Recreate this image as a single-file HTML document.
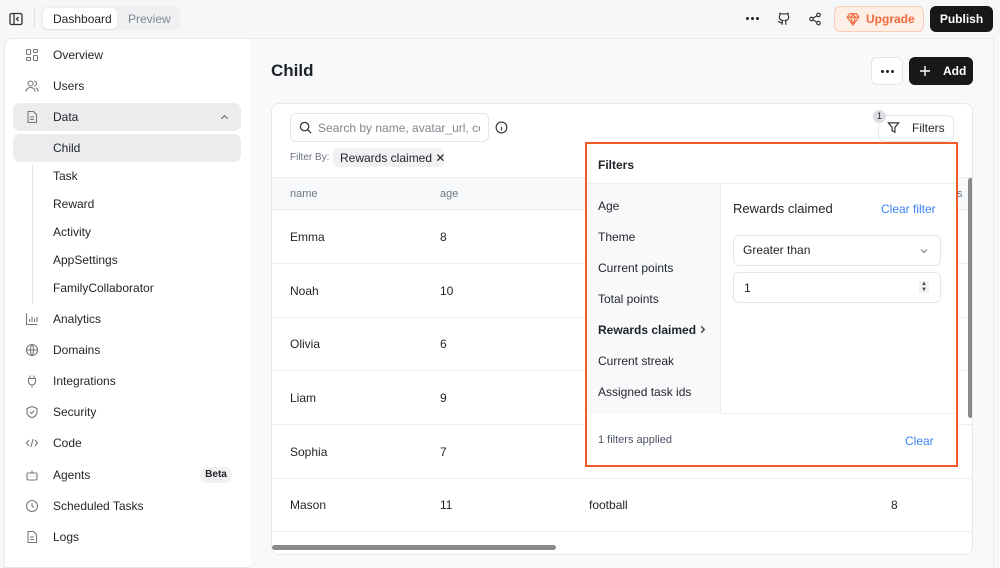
<!DOCTYPE html>
<html><head><style>
*{box-sizing:border-box;margin:0;padding:0}
body{width:1000px;height:559px;overflow:hidden;background:#f6f7f9;font-family:"Liberation Sans",sans-serif;color:#1f2328;position:relative;font-size:12px}
.a{position:absolute}
.sb{left:4px;top:38px;width:247px;height:530px;background:#fff;border:1px solid #e6e8eb;border-radius:8px 0 0 0}
.nav{position:absolute;left:53px;font-size:12px;color:#1f2328;white-space:nowrap}
.ic{position:absolute;left:25px;width:14px;height:14px}
.main{left:250px;top:38px;width:744px;height:530px;background:#f8f9fb;border-top:1px solid #e6e8eb;border-right:1px solid #e6e8eb}
.card{left:271px;top:103px;width:702px;height:452px;background:#fff;border:1px solid #e6e8eb;border-radius:8px;overflow:hidden}
.row{position:absolute;left:0;width:700px;border-top:1px solid #eceef0}
.td{position:absolute;font-size:12px}
.pop{left:585px;top:142px;width:373px;height:325px;border:2px solid #f15a29;background:#fff}
.fl{position:absolute;left:11px;font-size:12px}
.dots{display:flex;align-items:center;justify-content:center;gap:2px}
.dots i{width:3px;height:3px;border-radius:2px;background:#222;display:block}
</style></head><body>
<!-- top bar -->
<svg class="a" style="left:9px;top:12px" width="14" height="14" viewBox="0 0 14 14" fill="none" stroke="#333" stroke-width="1.3"><rect x="1" y="1.5" width="12" height="11" rx="1.5"/><path d="M5 1.5v11M9.5 5l-2 2 2 2"/></svg>
<div class="a" style="left:34px;top:8px;width:1px;height:20px;background:#e0e2e5"></div>
<div class="a" style="left:41px;top:6px;width:139px;height:25px;background:#eff0f2;border-radius:7px"></div>
<div class="a" style="left:43px;top:8px;width:74px;height:21px;background:#fff;border-radius:6px;box-shadow:0 1px 1px rgba(0,0,0,.06)"></div>
<div class="a" style="left:53px;top:12px;font-size:12px">Dashboard</div>
<div class="a" style="left:128px;top:12px;font-size:12px;color:#80868f">Preview</div>
<div class="a dots" style="left:744px;top:12px;width:16px;height:12px"><i></i><i></i><i></i></div>
<svg class="a" style="left:777px;top:12px" width="14" height="14" viewBox="0 0 24 24" fill="none" stroke="#333" stroke-width="2"><path d="M15 22v-4a4.8 4.8 0 0 0-1-3.5c3 0 6-2 6-5.5.08-1.25-.27-2.48-1-3.5.28-1.150.28-2.350 0-3.5 0 0-1 0-3 1.5-2.64-.5-5.360-.5-8 0C6 2 5 2 5 2c-.3 1.15-.3 2.35 0 3.5A5.4 5.4 0 0 0 4 9c0 3.5 3 5.5 6 5.5-.39.49-.68 1.05-.85 1.65S8.93 17.38 9 18v4"/><path d="M9 18c-4.51 2-5-2-7-2"/></svg>
<svg class="a" style="left:808px;top:12px" width="14" height="14" viewBox="0 0 24 24" fill="none" stroke="#333" stroke-width="2"><circle cx="18" cy="5" r="3"/><circle cx="6" cy="12" r="3"/><circle cx="18" cy="19" r="3"/><path d="M8.6 13.5l6.8 4M15.4 6.5l-6.8 4"/></svg>
<div class="a" style="left:834px;top:6px;width:90px;height:26px;background:#fdeee6;border:1px solid #f8cdb7;border-radius:6px"></div>
<svg class="a" style="left:846px;top:12px" width="14" height="14" viewBox="0 0 24 24" fill="none" stroke="#f26a3b" stroke-width="2"><path d="M6 3h12l4 6-10 13L2 9z"/><path d="M2 9h20M12 22 8 9l4-6 4 6z"/></svg>
<div class="a" style="left:866px;top:12px;font-size:12px;font-weight:bold;color:#f26a3b">Upgrade</div>
<div class="a" style="left:930px;top:6px;width:63px;height:26px;background:#16181a;border-radius:6px;color:#fff;font-weight:bold;font-size:12px;text-align:center;line-height:26px">Publish</div>

<!-- sidebar -->
<div class="a sb"></div>
<div class="a" style="left:13px;top:103px;width:228px;height:28px;background:#ebecee;border-radius:7px"></div>
<div class="a" style="left:13px;top:134px;width:228px;height:28px;background:#ebecee;border-radius:7px"></div>
<div class="a" style="left:32px;top:164px;width:1px;height:140px;background:#e3e5e8"></div>
<svg class="ic" style="top:48px" viewBox="0 0 14 14" fill="none" stroke="#777" stroke-width="1.1"><rect x="1.5" y="1.5" width="4" height="5" rx="1"/><rect x="8.5" y="1.5" width="4" height="3" rx="1"/><rect x="8.5" y="7.5" width="4" height="5" rx="1"/><rect x="1.5" y="9.5" width="4" height="3" rx="1"/></svg>
<div class="nav" style="top:48px">Overview</div>
<svg class="ic" style="top:79px" viewBox="0 0 14 14" fill="none" stroke="#777" stroke-width="1.1"><circle cx="5.5" cy="4.5" r="2.5"/><path d="M1 12.5c0-2.5 2-4 4.5-4s4.5 1.5 4.5 4M9 2a2.5 2.5 0 0 1 0 5M11 9c1.3.5 2 1.8 2 3.5"/></svg>
<div class="nav" style="top:79px">Users</div>
<svg class="ic" style="top:110px" viewBox="0 0 14 14" fill="none" stroke="#777" stroke-width="1.1"><path d="M3 1.5h5.5l3 3v8h-8.5z"/><path d="M5 7h4M5 9.5h4"/></svg>
<div class="nav" style="top:110px">Data</div>
<svg class="a" style="left:219px;top:112px" width="11" height="11" viewBox="0 0 12 12" fill="none" stroke="#666" stroke-width="1.2"><path d="M2.5 7.5 6 4l3.5 3.5"/></svg>
<div class="nav" style="top:141px">Child</div>
<div class="nav" style="top:169px">Task</div>
<div class="nav" style="top:197px">Reward</div>
<div class="nav" style="top:225px">Activity</div>
<div class="nav" style="top:253px">AppSettings</div>
<div class="nav" style="top:281px">FamilyCollaborator</div>
<svg class="ic" style="top:312px" viewBox="0 0 14 14" fill="none" stroke="#777" stroke-width="1.1"><path d="M1.5 1.5v11h11M4.5 10V7M7 10V4.5M9.5 10V6.5M12 10V5"/></svg>
<div class="nav" style="top:312px">Analytics</div>
<svg class="ic" style="top:343px" viewBox="0 0 14 14" fill="none" stroke="#777" stroke-width="1.1"><circle cx="7" cy="7" r="5.5"/><path d="M1.5 7h11M7 1.5c-2 2-2 9 0 11M7 1.5c2 2 2 9 0 11"/></svg>
<div class="nav" style="top:343px">Domains</div>
<svg class="ic" style="top:374px" viewBox="0 0 14 14" fill="none" stroke="#777" stroke-width="1.1"><path d="M5 1.5v3M9 1.5v3M3.5 4.5h7v3a3.5 3.5 0 0 1-7 0zM7 11v2.5"/></svg>
<div class="nav" style="top:374px">Integrations</div>
<svg class="ic" style="top:405px" viewBox="0 0 14 14" fill="none" stroke="#777" stroke-width="1.1"><path d="M7 1.5l5 2v3.5c0 3-2.5 5-5 5.5-2.5-.5-5-2.5-5-5.5V3.5z"/><path d="M5 7l1.5 1.5L9.5 5.5"/></svg>
<div class="nav" style="top:405px">Security</div>
<svg class="ic" style="top:436px" viewBox="0 0 14 14" fill="none" stroke="#777" stroke-width="1.1"><path d="M4 4 1.5 7 4 10M10 4l2.5 3L10 10M8 3 6 11"/></svg>
<div class="nav" style="top:436px">Code</div>
<svg class="ic" style="top:468px" viewBox="0 0 14 14" fill="none" stroke="#777" stroke-width="1.1"><rect x="2" y="5" width="10" height="7" rx="1.5"/><path d="M7 5V2.5M5 8.5v.5M9 8.5v.5"/></svg>
<div class="nav" style="top:468px">Agents</div>
<div class="a" style="left:200px;top:467px;width:32px;height:16px;background:#f0f1f3;border-radius:8px;font-size:10px;font-weight:bold;text-align:center;line-height:16px">Beta</div>
<svg class="ic" style="top:499px" viewBox="0 0 14 14" fill="none" stroke="#777" stroke-width="1.1"><circle cx="7" cy="7" r="5.5"/><path d="M7 4v3l2 1.5"/></svg>
<div class="nav" style="top:499px">Scheduled Tasks</div>
<svg class="ic" style="top:530px" viewBox="0 0 14 14" fill="none" stroke="#777" stroke-width="1.1"><path d="M3 1.5h5.5l3 3v8h-8.5z"/><path d="M5 7h4M5 9.5h4"/></svg>
<div class="nav" style="top:530px">Logs</div>

<!-- main -->
<div class="a main"></div>
<div class="a" style="left:271px;top:61px;font-size:17px;font-weight:bold">Child</div>
<div class="a dots" style="left:871px;top:57px;width:32px;height:28px;background:#fff;border:1px solid #e3e5e8;border-radius:6px"><i></i><i></i><i></i></div>
<div class="a" style="left:909px;top:57px;width:64px;height:28px;background:#16181a;border-radius:6px"></div>
<svg class="a" style="left:919px;top:65px" width="12" height="12" viewBox="0 0 12 12" stroke="#fff" stroke-width="1.4"><path d="M6 1v10M1 6h10"/></svg>
<div class="a" style="left:943px;top:64px;color:#fff;font-size:12px;font-weight:bold">Add</div>

<div class="a card">
 <div class="a" style="left:0;top:73px;width:700px;height:33px;background:#f8f9fb;border-top:1px solid #eceef0"></div>
 <div class="td" style="left:18px;top:84px;font-size:11px;color:#6b7785">name</div>
 <div class="td" style="left:168px;top:84px;font-size:11px;color:#6b7785">age</div>
 <div class="td" style="left:682px;top:84px;font-size:11px;color:#6b7785">ts</div>
 <div class="row" style="top:105px"></div>
 <div class="row" style="top:159px"></div>
 <div class="row" style="top:213px"></div>
 <div class="row" style="top:266px"></div>
 <div class="row" style="top:320px"></div>
 <div class="row" style="top:374px"></div>
 <div class="row" style="top:427px"></div>
 <div class="td" style="left:18px;top:126px">Emma</div><div class="td" style="left:168px;top:126px">8</div>
 <div class="td" style="left:18px;top:180px">Noah</div><div class="td" style="left:168px;top:180px">10</div>
 <div class="td" style="left:18px;top:233px">Olivia</div><div class="td" style="left:168px;top:233px">6</div>
 <div class="td" style="left:18px;top:287px">Liam</div><div class="td" style="left:168px;top:287px">9</div>
 <div class="td" style="left:18px;top:341px">Sophia</div><div class="td" style="left:168px;top:341px">7</div>
 <div class="td" style="left:18px;top:394px">Mason</div><div class="td" style="left:168px;top:394px">11</div>
 <div class="td" style="left:317px;top:394px">football</div><div class="td" style="left:619px;top:394px">8</div>
 <div class="a" style="left:696px;top:74px;width:5px;height:240px;background:#8a8a8a;border-radius:3px"></div>
 <div class="a" style="left:0;top:441px;width:284px;height:5px;background:#8a8a8a;border-radius:3px"></div>
</div>
<div class="a" style="left:290px;top:113px;width:199px;height:29px;background:#fff;border:1px solid #e3e5e8;border-radius:6px"></div>
<svg class="a" style="left:299px;top:121px" width="13" height="13" viewBox="0 0 14 14" fill="none" stroke="#333" stroke-width="1.4"><circle cx="6" cy="6" r="4.5"/><path d="M9.5 9.5 13 13"/></svg>
<div class="a" style="left:318px;top:121px;font-size:12px;color:#80868f;white-space:nowrap;width:162px;overflow:hidden">Search by name, avatar_url, colo</div>
<svg class="a" style="left:495px;top:121px" width="13" height="13" viewBox="0 0 14 14" fill="none" stroke="#333" stroke-width="1.2"><circle cx="7" cy="7" r="5.8"/><path d="M7 6.2v4M7 4v.3"/></svg>
<div class="a" style="left:290px;top:152px;font-size:10px;color:#6b7280">Filter By:</div>
<div class="a" style="left:333px;top:148px;width:111px;height:19px;background:#f0f1f3;border-radius:5px;font-size:12px;padding:3px 0 0 7px;white-space:nowrap">Rewards claimed ✕</div>
<div class="a" style="left:878px;top:115px;width:76px;height:27px;background:#fff;border:1px solid #e6e8eb;border-radius:6px"></div>
<div class="a" style="left:873px;top:110px;width:13px;height:13px;background:#dcdee1;border-radius:7px;font-size:9px;text-align:center;line-height:13px">1</div>
<svg class="a" style="left:887px;top:121px" width="13" height="13" viewBox="0 0 14 14" fill="none" stroke="#333" stroke-width="1.3"><path d="M1.5 2h11L8.5 7v5l-3-1.5V7z"/></svg>
<div class="a" style="left:912px;top:121px;font-size:12px">Filters</div>

<!-- popover -->
<div class="a pop">
 <div class="a" style="left:11px;top:14px;font-size:12px;font-weight:bold">Filters</div>
 <div class="a" style="left:0;top:39px;width:369px;height:231px;border-top:1px solid #eceef0;border-bottom:1px solid #eceef0"></div>
 <div class="a" style="left:0;top:40px;width:134px;height:230px;background:#f8f9fb;border-right:1px solid #eceef0"></div>
 <div class="fl" style="top:55px">Age</div>
 <div class="fl" style="top:86px">Theme</div>
 <div class="fl" style="top:117px">Current points</div>
 <div class="fl" style="top:148px">Total points</div>
 <div class="fl" style="top:179px;font-weight:bold">Rewards claimed</div>
 <svg class="a" style="left:111px;top:181px" width="9" height="9" viewBox="0 0 10 10" fill="none" stroke="#333" stroke-width="1.4"><path d="M3.5 1.5 7 5l-3.5 3.5"/></svg>
 <div class="fl" style="top:210px">Current streak</div>
 <div class="fl" style="top:241px">Assigned task ids</div>
 <div class="a" style="left:146px;top:57px;font-size:13px">Rewards claimed</div>
 <div class="a" style="left:294px;top:58px;font-size:12px;color:#3b82f6">Clear filter</div>
 <div class="a" style="left:146px;top:91px;width:208px;height:31px;border:1px solid #e3e5e8;border-radius:6px"></div>
 <div class="a" style="left:156px;top:99px;font-size:12px">Greater than</div>
 <svg class="a" style="left:332px;top:102px" width="10" height="10" viewBox="0 0 10 10" fill="none" stroke="#777" stroke-width="1"><path d="M2 3.5 5 6.5 8 3.5"/></svg>
 <div class="a" style="left:146px;top:128px;width:208px;height:31px;border:1px solid #e3e5e8;border-radius:6px"></div>
 <div class="a" style="left:157px;top:137px;font-size:12px">1</div>
 <div class="a" style="left:332px;top:137px;width:10px;height:12px;background:#eef0f2;font-size:6px;line-height:6px;text-align:center;color:#444">▲<br>▼</div>
 <div class="a" style="left:11px;top:290px;font-size:11px;color:#4b5563">1 filters applied</div>
 <div class="a" style="left:318px;top:290px;font-size:12px;color:#3b82f6">Clear</div>
</div>
</body></html>
